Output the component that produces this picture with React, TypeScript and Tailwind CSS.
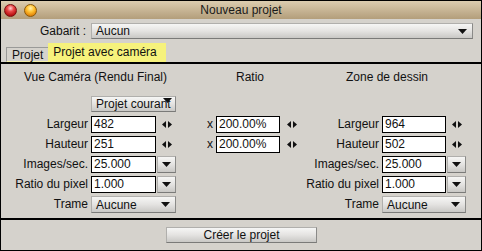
import type { ReactNode } from "react"

const font = { fontFamily: '"Liberation Sans", Arial, sans-serif' }

function Tri() {
  return (
    <svg width="9" height="5" viewBox="0 0 9 5" className="block">
      <polygon points="0,0 9,0 4.5,5" fill="#111" />
    </svg>
  )
}

function Spin() {
  return (
    <svg width="10" height="7" viewBox="0 0 10 7" className="block">
      <polygon points="4,0 4,7 0,3.5" fill="#111" />
      <polygon points="6,0 6,7 10,3.5" fill="#111" />
    </svg>
  )
}

const btn =
  "bg-gradient-to-b from-[#f6f6f5] via-[#e4e3e1] to-[#c9c8c5] border border-[#b0afac] border-b-[#7a7a78] border-r-[#8a8a88]"

function Field({ value, w }: { value: string; w: string }) {
  return (
    <div className={`${w} h-[17px] bg-white border border-black pl-[2px] text-[12px] leading-[15px] text-[#111]`}>
      {value}
    </div>
  )
}

function DropBtn() {
  return (
    <div className={`${btn} w-[19px] h-[17px] flex items-center justify-center`}>
      <Tri />
    </div>
  )
}

function Select({ value, w }: { value: string; w: string }) {
  return (
    <div className={`${btn} ${w} h-[17px] flex items-center justify-between pl-[4px] pr-[5px] text-[12px] text-[#111]`}>
      <span>{value}</span>
      <Tri />
    </div>
  )
}

function Label({ w, children }: { w: string; children: ReactNode }) {
  return (
    <div className={`${w} text-right whitespace-nowrap text-[12px] leading-[17px] text-[#111]`}>{children}</div>
  )
}

type Ctl = "spin" | "drop"

function Side({ label, value, ctl, lw, iw }: { label: string; value: string; ctl: Ctl; lw: string; iw: string }) {
  return (
    <>
      <Label w={lw}>{label}</Label>
      <div className="ml-[3px]">
        <Field value={value} w={iw} />
      </div>
      {ctl === "spin" ? (
        <div className="ml-[6px] w-[14px] flex items-center h-[17px]">
          <Spin />
        </div>
      ) : (
        <div className="ml-[1px]">
          <DropBtn />
        </div>
      )}
    </>
  )
}

function Row({ label, value, ctl, ratio, right }: { label: string; value: string; ctl: Ctl; ratio?: string; right: string }) {
  return (
    <div className="flex h-[17px]">
      <div className="w-[175px] flex">
        <Side label={label} value={value} ctl={ctl} lw="w-[87px]" iw="w-[65px]" />
      </div>
      <div className="w-[121px] flex items-center">
        {ratio && (
          <>
            <span className="ml-[31px] w-[6px] text-[12px] leading-[17px] text-[#111]">x</span>
            <div className="ml-[3px]">
              <Field value={ratio} w="w-[64px]" />
            </div>
            <div className="ml-[7px]">
              <Spin />
            </div>
          </>
        )}
      </div>
      <div className="flex">
        <Side label={label} value={right} ctl={ctl} lw="w-[82px]" iw="w-[64px]" />
      </div>
    </div>
  )
}

export default function App() {
  return (
    <div style={font} className="w-[482px] h-[251px] border border-black bg-[#d5d2cc] flex flex-col overflow-hidden">
      {/* Barre de titre */}
      <div className="h-[18px] shrink-0 bg-gradient-to-b from-[#dccdb0] to-[#b39e7b] grid grid-cols-[1fr_auto_1fr] items-center">
        <div className="flex items-center gap-[7px] pl-[3px]">
          <div className="w-[13px] h-[13px] rounded-full border border-[#7a1010] bg-[radial-gradient(circle_at_50%_30%,#ffd0d0_0%,#e84848_35%,#b81010_75%,#7a0808_100%)]" />
          <div className="w-[13px] h-[13px] rounded-full border border-[#8a5a08] bg-[radial-gradient(circle_at_50%_30%,#fff2b0_0%,#ffc030_40%,#e08008_80%,#a05a00_100%)]" />
        </div>
        <div className="text-[12px] text-[#1a1a1a] leading-[18px]">Nouveau projet</div>
        <div />
      </div>

      {/* Gabarit */}
      <div className="flex items-center mt-[4px] h-[16px]">
        <div className="w-[85px] text-right text-[12px] text-[#111]">Gabarit :</div>
        <div className={`${btn} ml-[5px] w-[382px] h-[16px] flex items-center justify-between pl-[4px] pr-[5px] text-[12px] text-[#111]`}>
          <span>Aucun</span>
          <Tri />
        </div>
      </div>

      {/* Onglets */}
      <div className="flex items-end mt-[4px] h-[19px] pl-[5px]">
        <div className="h-[15px] px-[5px] border-l border-t border-[#9a9a98] border-b border-b-[#f4f0a8] text-[12px] leading-[14px] text-[#111]">
          Projet
        </div>
        <div className="h-[19px] w-[118px] bg-[#f6f27c] pl-[5px] text-[12px] leading-[19px] text-[#111]">
          Projet avec caméra
        </div>
      </div>
      <div className="h-[2px] bg-black shrink-0" />

      {/* En-têtes */}
      <div className="flex mt-[5px] h-[17px] text-[12px] leading-[17px] text-[#111]">
        <div className="w-[189px] text-center">Vue Caméra (Rendu Final)</div>
        <div className="w-[120px] text-center">Ratio</div>
        <div className="w-[154px] text-center">Zone de dessin</div>
      </div>

      <div className="mt-[10px] ml-[90px]">
        <div className={`${btn} relative w-[85px] h-[16px] pl-[4px] text-[12px] leading-[14px] text-[#111] whitespace-nowrap`}>
          Projet courant
          <div className="absolute right-[3px] top-[1px]">
            <Tri />
          </div>
        </div>
      </div>

      <div className="mt-[4px] flex flex-col gap-[3px]">
        <Row label="Largeur" value="482" ctl="spin" ratio="200.00%" right="964" />
        <Row label="Hauteur" value="251" ctl="spin" ratio="200.00%" right="502" />
        <Row label="Images/sec." value="25.000" ctl="drop" right="25.000" />
        <Row label="Ratio du pixel" value="1.000" ctl="drop" right="1.000" />
        <div className="flex h-[17px]">
          <div className="w-[296px] flex">
            <Label w="w-[87px]">Trame</Label>
            <div className="ml-[3px]">
              <Select value="Aucune" w="w-[85px]" />
            </div>
          </div>
          <div className="flex">
            <Label w="w-[82px]">Trame</Label>
            <div className="ml-[3px]">
              <Select value="Aucune" w="w-[84px]" />
            </div>
          </div>
        </div>
      </div>

      <div className="h-[2px] bg-black mt-[5px] shrink-0" />

      <div className="mt-[7px] ml-[165px]">
        <div className={`${btn} w-[151px] h-[16px] text-center text-[12px] leading-[14px] text-[#111]`}>
          Créer le projet
        </div>
      </div>
    </div>
  )
}
